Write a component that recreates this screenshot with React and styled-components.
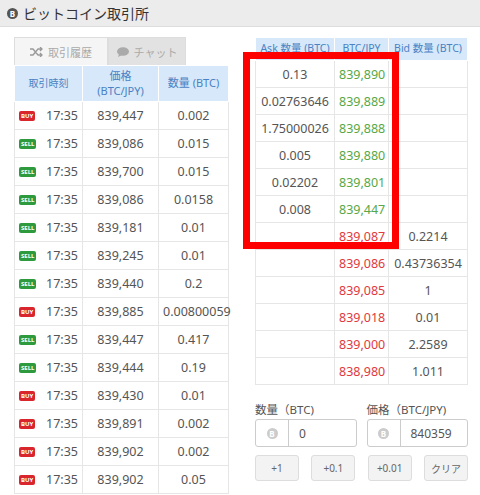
import React from "react";
import styled, { createGlobalStyle } from "styled-components";

const G = createGlobalStyle`
  body{margin:0;background:#fff;font-family:"Noto Sans","Noto Sans CJK JP",sans-serif;color:#555;}
`;
const Head = styled.div`height:26px;background:#ececec;border-bottom:1px solid #ddd;display:flex;align-items:center;gap:5px;padding-left:7px;font-size:14px;color:#333;`;
const Coin = styled.span`width:11px;height:11px;border-radius:50%;background:${p=>p.c||"#555"};color:#fff;font-size:8px;font-weight:bold;display:inline-flex;align-items:center;justify-content:center;`;
const Main = styled.div`display:flex;padding:10px 0 0 14px;gap:26px;position:relative;`;
const Left = styled.div`width:215px;`;
const Tabs = styled.div`display:flex;height:28px;`;
const Tab = styled.div`width:${p=>p.w}px;display:flex;align-items:center;justify-content:center;gap:5px;font-size:11px;color:#aaa;background:${p=>p.a?"#f5f5f5":"#e2e2e2"};border:1px solid #ddd;border-bottom:none;`;
const Table = styled.table`border-collapse:collapse;width:100%;font-size:12.5px;table-layout:fixed;`;
const Th = styled.th`background:#d6e8f9;color:#4a82c4;font-weight:normal;font-size:${p=>p.fs||10}px;height:${p=>p.h}px;border:1px solid #fff;line-height:1.3;padding:0 2px;white-space:nowrap;`;
const Td = styled.td`height:${p=>p.h}px;border:1px solid #e6e6e6;text-align:${p=>p.al||"center"};color:${p=>p.c||"#555"};padding:0 4px;white-space:nowrap;`;
const Badge = styled.span`font-size:6px;font-weight:bold;color:#fff;background:${p=>p.buy?"#d9262c":"#2e9a3e"};padding:1px 2px;border-radius:2px;margin-right:auto;`;
const Time = styled.div`display:flex;align-items:center;justify-content:space-between;`;
const Right = styled.div`width:213px;padding-top:0;`;
const RedBox = styled.div`position:absolute;left:243px;top:25px;width:142px;height:183px;border:7px solid #f00;pointer-events:none;`;
const Form = styled.div`display:flex;gap:10px;margin-top:16px;`;
const Field = styled.div`flex:1;`;
const Label = styled.div`font-size:11.5px;color:#555;margin-bottom:2px;`;
const Input = styled.div`height:26px;border:1px solid #ccc;border-radius:3px;display:flex;align-items:center;font-size:12px;`;
const Addon = styled.div`width:32px;height:100%;border-right:1px solid #ccc;display:flex;align-items:center;justify-content:center;`;
const Val = styled.div`padding-left:10px;`;
const Btns = styled.div`display:flex;justify-content:space-between;margin-top:8px;`;
const Btn = styled.div`width:${p=>p.w||42}px;height:24px;border:1px solid #ddd;border-radius:3px;background:#f3f3f3;font-size:10px;color:#666;display:flex;align-items:center;justify-content:center;`;

const trades=[["BUY","839,447","0.002"],["SELL","839,086","0.015"],["SELL","839,700","0.015"],["SELL","839,086","0.0158"],["SELL","839,181","0.01"],["SELL","839,245","0.01"],["SELL","839,440","0.2"],["BUY","839,885","0.00800059"],["SELL","839,447","0.417"],["SELL","839,444","0.19"],["BUY","839,430","0.01"],["BUY","839,891","0.002"],["BUY","839,902","0.002"],["BUY","839,902","0.05"]];
const asks=[["0.13","839,890"],["0.02763646","839,889"],["1.75000026","839,888"],["0.005","839,880"],["0.02202","839,801"],["0.008","839,447"]];
const bids=[["839,087","0.2214"],["839,086","0.43736354"],["839,085","1"],["839,018","0.01"],["839,000","2.2589"],["838,980","1.011"]];

export default function App(){
  return <>
    <G/>
    <Head><Coin>B</Coin>ビットコイン取引所</Head>
    <Main>
      <Left>
        <Tabs>
          <Tab a w={92}><svg width="13" height="10" viewBox="0 0 13 10" fill="none" stroke="#999" strokeWidth="1.3"><path d="M0 2h3l5 6h4M0 8h3l5-6h4M10 0l2 2-2 2M10 6l2 2-2 2"/></svg>取引履歴</Tab>
          <Tab w={76}><svg width="12" height="10" viewBox="0 0 12 10"><ellipse cx="6" cy="4.5" rx="6" ry="4.3" fill="#aaa"/><path d="M2 7l-1 3 4-2z" fill="#aaa"/></svg>チャット</Tab>
        </Tabs>
        <Table>
          <colgroup><col style={{width:68}}/><col style={{width:76}}/><col/></colgroup>
          <thead><tr><Th h={35}>取引時刻</Th><Th h={35} fs={11}>価格<br/>(BTC/JPY)</Th><Th h={35} fs={11}>数量 (BTC)</Th></tr></thead>
          <tbody>{trades.map((t,i)=><tr key={i}>
            <Td h={27}><Time><Badge buy={t[0]==="BUY"}>{t[0]}</Badge>17:35</Time></Td>
            <Td h={27}>{t[1]}</Td><Td h={27}>{t[2]}</Td></tr>)}</tbody>
        </Table>
      </Left>
      <Right>
        <Table>
          <colgroup><col style={{width:79}}/><col style={{width:54}}/><col/></colgroup>
          <thead><tr><Th h={22} fs={10.5}>Ask 数量 (BTC)</Th><Th h={22} fs={10.5}>BTC/JPY</Th><Th h={22} fs={10.5}>Bid 数量 (BTC)</Th></tr></thead>
          <tbody>
            {asks.map((a,i)=><tr key={i}><Td h={26}>{a[0]}</Td><Td h={26} c="#58a845">{a[1]}</Td><Td h={26}/></tr>)}
            {bids.map((b,i)=><tr key={"b"+i}><Td h={26}/><Td h={26} c="#e0393e">{b[0]}</Td><Td h={26}>{b[1]}</Td></tr>)}
          </tbody>
        </Table>
        <Form>
          <Field><Label>数量（BTC)</Label><Input><Addon><Coin c="#ccc">B</Coin></Addon><Val>0</Val></Input></Field>
          <Field><Label>価格（BTC/JPY)</Label><Input><Addon><Coin c="#ccc">B</Coin></Addon><Val>840359</Val></Input></Field>
        </Form>
        <Btns><Btn>+1</Btn><Btn>+0.1</Btn><Btn>+0.01</Btn><Btn>クリア</Btn></Btns>
      </Right>
      <RedBox/>
    </Main>
  </>;
}
